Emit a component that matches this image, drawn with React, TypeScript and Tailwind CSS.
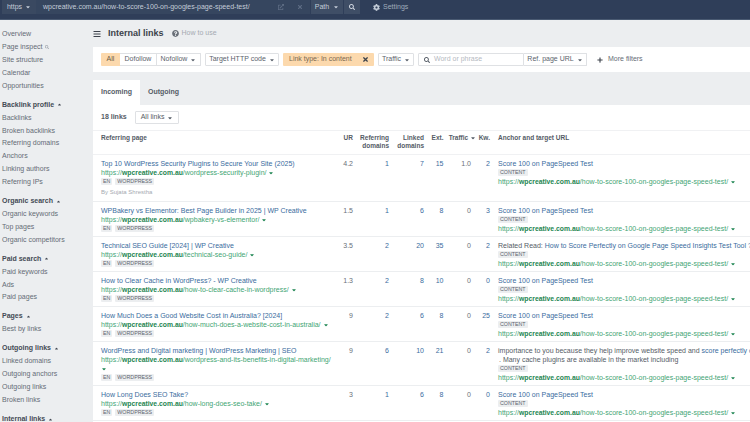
import type { ReactNode } from 'react'
import { FaCaretDown, FaCaretUp, FaCog, FaQuestionCircle, FaSearch, FaExternalLinkAlt, FaTimes, FaBars, FaPlus } from 'react-icons/fa'

const sideGroups = [
  { title: '', items: ['Overview', 'Page inspect', 'Site structure', 'Calendar', 'Opportunities'] },
  { title: 'Backlink profile', items: ['Backlinks', 'Broken backlinks', 'Referring domains', 'Anchors', 'Linking authors', 'Referring IPs'] },
  { title: 'Organic search', items: ['Organic keywords', 'Top pages', 'Organic competitors'] },
  { title: 'Paid search', items: ['Paid keywords', 'Ads', 'Paid pages'] },
  { title: 'Pages', items: ['Best by links'] },
  { title: 'Outgoing links', items: ['Linked domains', 'Outgoing anchors', 'Outgoing links', 'Broken links'] },
  { title: 'Internal links', items: [] },
]

const target = '/how-to-score-100-on-googles-page-speed-test/'

const rows = [
  { title: 'Top 10 WordPress Security Plugins to Secure Your Site (2025)', path: '/wordpress-security-plugin/', by: 'By Sujata Shrestha', ur: '4.2', rd: '1', ld: '7', ext: '15', traffic: '1.0', kw: '2' },
  { title: 'WPBakery vs Elementor: Best Page Builder in 2025 | WP Creative', path: '/wpbakery-vs-elementor/', ur: '1.5', rd: '1', ld: '6', ext: '8', traffic: '0', kw: '3' },
  { title: 'Technical SEO Guide [2024] | WP Creative', path: '/technical-seo-guide/', ur: '3.5', rd: '2', ld: '20', ext: '35', traffic: '0', kw: '2', anchor: 'related' },
  { title: 'How to Clear Cache in WordPress? - WP Creative', path: '/how-to-clear-cache-in-wordpress/', ur: '1.3', rd: '2', ld: '8', ext: '10', traffic: '0', kw: '0' },
  { title: 'How Much Does a Good Website Cost in Australia? [2024]', path: '/how-much-does-a-website-cost-in-australia/', ur: '9', rd: '2', ld: '6', ext: '8', traffic: '0', kw: '25' },
  { title: 'WordPress and Digital marketing | WordPress Marketing | SEO', path: '/wordpress-and-its-benefits-in-digital-marketing/', ur: '9', rd: '6', ld: '10', ext: '21', traffic: '0', kw: '2', anchor: 'importance', wrap: true },
  { title: 'How Long Does SEO Take?', path: '/how-long-does-seo-take/', ur: '3', rd: '1', ld: '6', ext: '8', traffic: '0', kw: '0' },
]

function Caret() {
  return <FaCaretDown className="inline-block h-[6px] w-[6px] shrink-0" />
}

function Url({ path, wrap }: { path: string; wrap?: boolean }) {
  return (
    <div className="whitespace-nowrap leading-[9px] text-[#3fa574]">
      https://<b className="text-[6.8px] text-[#1d8551]">wpcreative.com.au</b>
      {path}
      {wrap ? <br /> : ' '}
      <span className="text-[#1d8551]">
        <Caret />
      </span>
    </div>
  )
}

function Tag({ children }: { children: string }) {
  return <span className="rounded-[1px] bg-[#eceef0] px-[2px] text-[5.3px] leading-[7px] text-[#5c636d]">{children}</span>
}

function FilterBtn({ children, className = '' }: { children: ReactNode; className?: string }) {
  return (
    <div className={`flex h-[13px] items-center justify-center gap-[3px] rounded-[1px] border border-[#dfe1e4] bg-white text-[#5c636d] ${className}`}>
      {children}
    </div>
  )
}

export default function App() {
  return (
    <div className="flex h-[422px] w-[750px] flex-col overflow-hidden bg-[#eceef0] font-['Liberation_Sans',Arial,sans-serif] text-[7px] text-[#555c66]">
      {/* top bar */}
      <div className="h-[20px] shrink-0 border-b border-[#4a5a72] bg-[#2f3e59]">
        <div className="flex h-[14px] items-center text-[#c3ccd8]">
          <div className="ml-[2px] flex h-full w-[34px] items-center justify-center gap-[3px] bg-[#3a4961]">
            https <Caret />
          </div>
          <div className="flex h-full w-[274px] items-center bg-[#36465f] pl-[7px]">
            <span className="flex-1 whitespace-nowrap">wpcreative.com.au/how-to-score-100-on-googles-page-speed-test/</span>
            <FaExternalLinkAlt className="h-[6px] w-[6px] text-[#5f6e85]" />
            <FaTimes className="ml-[13px] mr-[7px] h-[6px] w-[6px] text-[#5f6e85]" />
          </div>
          <div className="ml-px flex h-full w-[32px] items-center justify-center gap-[4px] bg-[#3f4e66]">
            Path <Caret />
          </div>
          <div className="ml-px flex h-full w-[16px] items-center justify-center bg-[#3f4e66]">
            <FaSearch className="h-[6px] w-[6px] text-[#d5dbe4]" />
          </div>
          <div className="ml-[13px] flex items-center gap-[3px] text-[#9fabbb]">
            <FaCog className="h-[7px] w-[7px] text-[#c3ccd8]" /> Settings
          </div>
        </div>
      </div>

      <div className="flex min-h-0 flex-1">
        {/* sidebar */}
        <div className="w-[93px] shrink-0 pl-[2px] pt-[8px]">
          {sideGroups.map((g) => (
            <div key={g.title} className="mb-[6px]">
              {g.title && (
                <div className="flex h-[13px] items-center gap-[3px] font-bold text-[#444b55]">
                  {g.title}
                  <FaCaretUp className="h-[5px] w-[5px]" />
                </div>
              )}
              {g.items.map((item) => (
                <div key={item} className="flex h-[12.9px] items-center gap-[3px] whitespace-nowrap text-[#656c76]">
                  {item}
                  {item === 'Page inspect' && <FaSearch className="h-[4px] w-[4px] text-[#9aa0a8]" />}
                </div>
              ))}
            </div>
          ))}
        </div>

        {/* main */}
        <div className="flex min-w-0 flex-1 flex-col">
          <div className="flex h-[27px] shrink-0 items-center">
            <FaBars className="h-[8px] w-[8px] text-[#3c424b]" />
            <span className="ml-[7px] text-[9px] font-bold text-[#3c424b]">Internal links</span>
            <FaQuestionCircle className="ml-[8px] h-[7px] w-[7px] text-[#6a7079]" />
            <span className="ml-[3px] text-[#a5aab1]">How to use</span>
          </div>

          <div className="flex h-[25px] shrink-0 items-center whitespace-nowrap bg-white pl-[8px]">
            <div className="flex h-[13px] w-[19px] items-center justify-center rounded-l-[1px] bg-[#fcd9ad] text-[#6b5a44]">All</div>
            <div className="flex h-[13px] w-[37px] items-center justify-center border border-l-0 border-[#dfe1e4] text-[#5c636d]">Dofollow</div>
            <FilterBtn className="w-[44px] rounded-l-none border-l-0">
              Nofollow <Caret />
            </FilterBtn>
            <FilterBtn className="ml-[4px] w-[74px]">
              Target HTTP code <Caret />
            </FilterBtn>
            <div className="ml-[4px] flex h-[13px] w-[91px] items-center rounded-[1px] bg-[#fcd9ad] pl-[6px] text-[#7a6850]">
              <span className="flex-1">Link type: In content</span>
              <FaTimes className="mr-[5px] h-[7px] w-[7px] text-[#3c424b]" />
            </div>
            <FilterBtn className="ml-[4px] w-[36px]">
              Traffic <Caret />
            </FilterBtn>
            <div className="ml-[4px] flex h-[13px] w-[106px] items-center gap-[4px] rounded-l-[1px] border border-[#dfe1e4] pl-[5px] text-[#b5b9bf]">
              <FaSearch className="h-[6px] w-[6px] text-[#555c66]" />
              Word or phrase
            </div>
            <FilterBtn className="w-[63px] rounded-l-none border-l-0">
              Ref. page URL <Caret />
            </FilterBtn>
            <FaPlus className="ml-[10px] h-[6px] w-[6px] text-[#3c424b]" />
            <span className="ml-[5px] text-[#656c76]">More filters</span>
          </div>

          <div className="mt-[8px] flex h-[25px] shrink-0">
            <div className="flex w-[47px] items-center justify-center bg-white font-bold">Incoming</div>
            <div className="flex w-[47px] items-center justify-center font-bold">Outgoing</div>
          </div>

          <div className="flex-1 bg-white">
            <div className="flex h-[25px] items-center gap-[8px] pl-[8px]">
              <b>18 links</b>
              <div className="flex h-[13px] items-center gap-[3px] rounded-[1px] border border-[#dfe1e4] px-[5px]">
                All links <Caret />
              </div>
            </div>

            <table className="w-[657px] table-fixed border-collapse">
              <colgroup>
                <col className="w-[242px]" />
                <col className="w-[18px]" />
                <col className="w-[36px]" />
                <col className="w-[35px]" />
                <col className="w-[19.5px]" />
                <col className="w-[32.5px]" />
                <col className="w-[14px]" />
                <col />
              </colgroup>
              <thead>
                <tr className="h-[24px] border-t border-b border-[#f0f1f3] align-top text-[6.5px] font-bold text-[#555c66]">
                  <th className="pl-[8px] pt-[3px] text-left leading-[8px]">Referring page</th>
                  <th className="pt-[3px] text-right leading-[8px]">UR</th>
                  <th className="pt-[3px] text-right leading-[8px]">Referring<br />domains</th>
                  <th className="pt-[3px] text-right leading-[8px]">Linked<br />domains</th>
                  <th className="pt-[3px] text-right leading-[8px]">Ext.</th>
                  <th className="whitespace-nowrap pt-[3px] text-right leading-[8px]">Traffic <Caret /></th>
                  <th className="pt-[3px] text-right leading-[8px]">Kw.</th>
                  <th className="whitespace-nowrap pl-[8px] pt-[3px] text-left leading-[8px]">Anchor and target URL</th>
                </tr>
              </thead>
              <tbody>
                {rows.map((r) => (
                  <tr key={r.title} className="border-b border-[#eceef0] align-top">
                    <td className="pb-[3px] pl-[8px] pt-[4px]">
                      <div className="whitespace-nowrap leading-[9px] text-[#3a6c9e]">{r.title}</div>
                      <Url path={r.path} wrap={r.wrap} />
                      <div className="flex h-[9px] items-center gap-[3px]">
                        <Tag>EN</Tag>
                        <Tag>WORDPRESS</Tag>
                      </div>
                      {r.by && <div className="mt-[2px] pb-[2px] text-[6px] leading-[8px] text-[#a5aab1]">{r.by}</div>}
                    </td>
                    <td className="pt-[4px] text-right leading-[9px] text-[#6a7079]">{r.ur}</td>
                    <td className="pt-[4px] text-right leading-[9px] text-[#3a6c9e]">{r.rd}</td>
                    <td className="pt-[4px] text-right leading-[9px] text-[#3a6c9e]">{r.ld}</td>
                    <td className="pt-[4px] text-right leading-[9px] text-[#3a6c9e]">{r.ext}</td>
                    <td className="pr-[5px] pt-[4px] text-right leading-[9px] text-[#6a7079]">{r.traffic}</td>
                    <td className="pt-[4px] text-right leading-[9px] text-[#3a6c9e]">{r.kw}</td>
                    <td className="whitespace-nowrap pl-[8px] pt-[4px]">
                      {r.anchor === 'related' ? (
                        <div className="leading-[9px]">
                          Related Read: <span className="text-[#3a6c9e]">How to Score Perfectly on Google Page Speed Insights Test Tool ?</span>
                        </div>
                      ) : r.anchor === 'importance' ? (
                        <>
                          <div className="leading-[9px]">
                            importance to you because they help improve website speed and <span className="text-[#3a6c9e]">score perfectly on PageSpeed Test</span>
                          </div>
                          <div className="pl-px leading-[9px]">. Many cache plugins are available in the market including</div>
                        </>
                      ) : (
                        <div className="leading-[9px] text-[#3a6c9e]">Score 100 on PageSpeed Test</div>
                      )}
                      <div className="flex h-[9px] items-center">
                        <Tag>CONTENT</Tag>
                      </div>
                      <Url path={target} />
                    </td>
                  </tr>
                ))}
              </tbody>
            </table>
          </div>
        </div>
      </div>
    </div>
  )
}
